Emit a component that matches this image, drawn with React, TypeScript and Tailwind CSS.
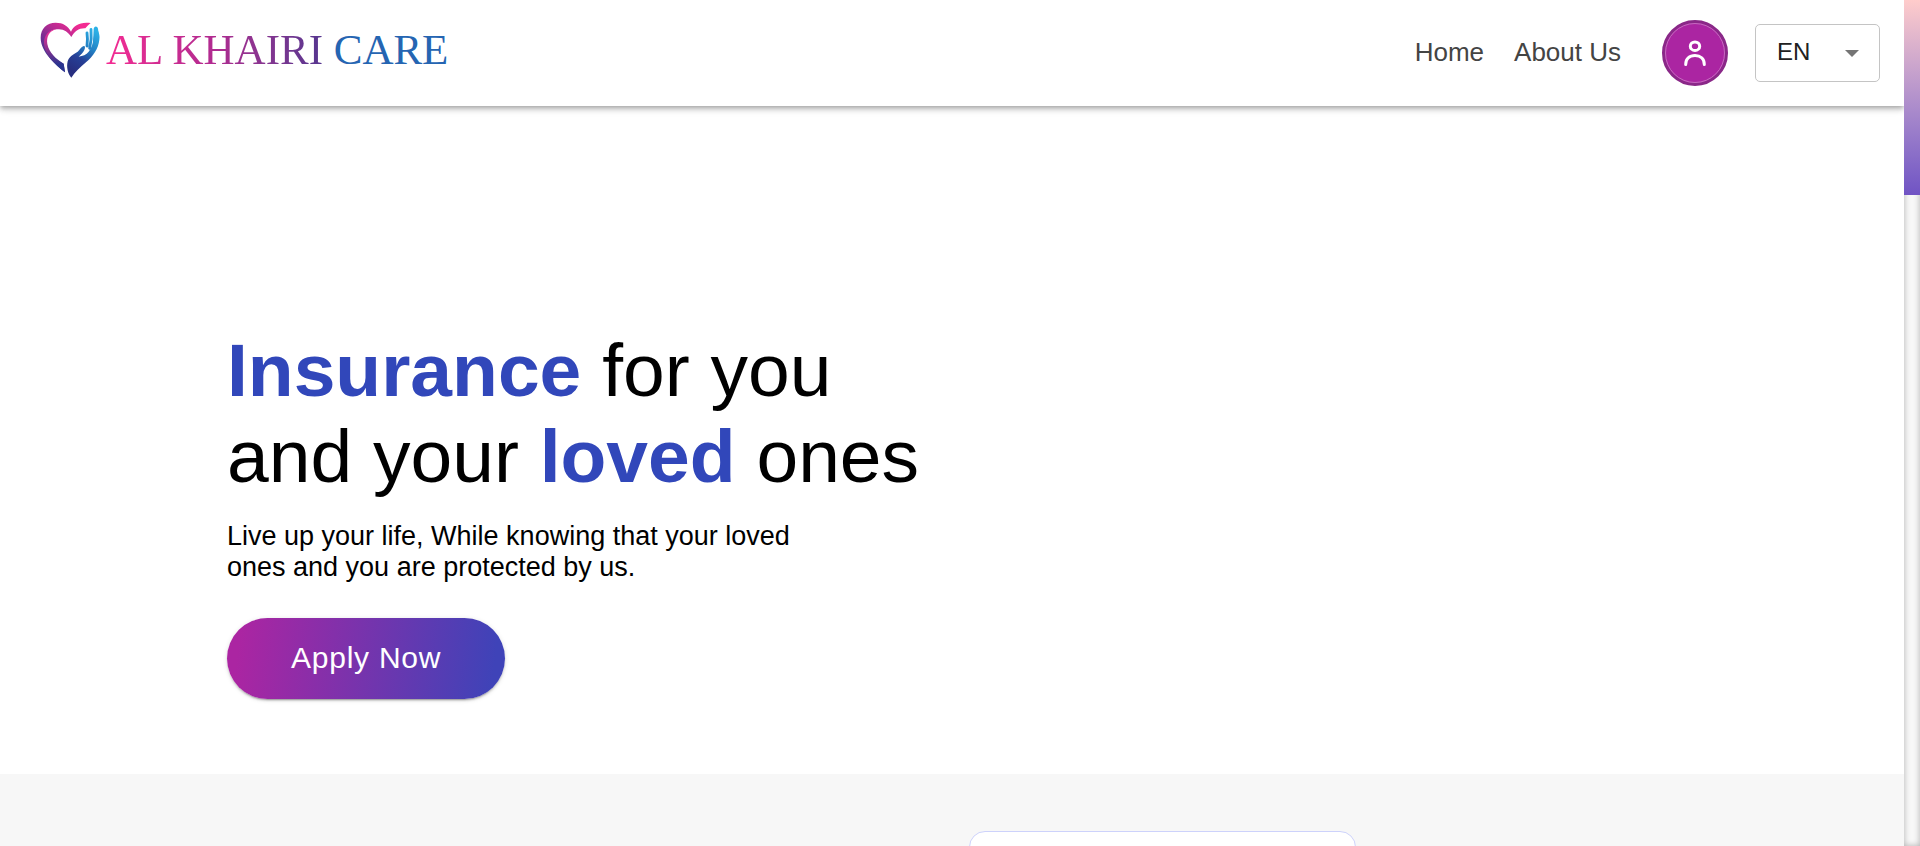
import React from "react";

function HeartLogo() {
  return (
    <svg viewBox="30 35 180 168" className="h-14 w-15 shrink-0" aria-hidden="true">
      <defs>
        <linearGradient id="heart" gradientUnits="userSpaceOnUse" x1="150" y1="45" x2="60" y2="170">
          <stop offset="0" stopColor="#f42b92" />
          <stop offset="0.35" stopColor="#b42b92" />
          <stop offset="0.65" stopColor="#6a2f92" />
          <stop offset="1" stopColor="#29348f" />
        </linearGradient>
        <linearGradient id="fold" gradientUnits="userSpaceOnUse" x1="60" y1="60" x2="70" y2="165">
          <stop offset="0" stopColor="#f0309a" />
          <stop offset="0.4" stopColor="#a3308f" />
          <stop offset="1" stopColor="#29348f" />
        </linearGradient>
        <linearGradient id="hand" gradientUnits="userSpaceOnUse" x1="195" y1="60" x2="120" y2="175">
          <stop offset="0" stopColor="#2bb0e6" />
          <stop offset="0.4" stopColor="#2380c3" />
          <stop offset="0.7" stopColor="#263f96" />
          <stop offset="1" stopColor="#272f80" />
        </linearGradient>
      </defs>
      <path
        fill="url(#heart)"
        d="M105 186C78 164 32 126 32 82C32 54 51 37 77 37C99 37 115 47 123 64C131 45 150 34 182 38C176 43 171 48 166 54C147 53 134 62 124 80C113 63 99 54 80 57C56 60 44 79 45 103C49 129 75 147 101 160Z"
      />
      <path
        fill="url(#fold)"
        d="M80 57C56 62 49 81 52 101C57 127 78 146 101 160L105 186C75 163 42 132 42 99C42 74 57 58 80 57Z"
      />
      <path
        fill="url(#hand)"
        d="M124 202C113 190 109 170 113 153C117 139 130 132 143 124C149 119 153 110 161 107C166 106 166 113 163 119C159 128 152 133 146 139C158 137 169 133 176 124C184 114 188 103 190 90L194 62C195 54 203 54 204 61C207 68 210 76 208 88C205 115 190 137 168 156C150 171 135 185 124 202Z"
      />
      <path
        fill="url(#hand)"
        d="M188 104C190 88 190 74 191 56C192 46 202 46 204 55C207 72 206 96 196 112Z"
      />
      <path
        fill="none"
        stroke="url(#hand)"
        strokeWidth="8.5"
        strokeLinecap="round"
        d="M171 68C173 81 173 93 171 107M183 57C185 76 184 94 179 114"
      />
    </svg>
  );
}

function Header() {
  return (
    <header className="relative flex h-[106px] shrink-0 items-center justify-between bg-white pr-6 pl-10 shadow-[0_2px_4px_-1px_rgba(0,0,0,0.2),0_4px_5px_0_rgba(0,0,0,0.14),0_1px_10px_0_rgba(0,0,0,0.12)]">
      <a
        href="#home"
        aria-label="Al Khairi Care"
        className="flex items-center gap-[6px] pb-[6px] font-['Liberation_Serif',serif] text-[43px] leading-[56px] whitespace-pre"
      >
        <HeartLogo />
        <span>
          <span className="bg-linear-to-r from-[#f42b92] via-[#b02a90] to-[#55358f] bg-clip-text text-transparent">
            AL KHAIRI
          </span>
          <span className="text-[#2565b2]"> CARE</span>
        </span>
      </a>
      <div className="flex items-center">
        <nav className="flex gap-[30px] pb-[2px] text-[26px] leading-[30px] text-[#444]">
          <a href="#home">Home</a>
          <a href="#about">About Us</a>
        </nav>
        <button
          type="button"
          aria-label="Account"
          className="ml-[41px] flex size-[66px] items-center justify-center rounded-full border-3 border-[#8a2888] bg-[#ab25a2]"
        >
          <span className="flex size-full items-center justify-center rounded-full border border-[#c56abf]">
            <svg viewBox="0 0 24 28" className="h-7 w-6" fill="none" stroke="#fff" strokeWidth="3" strokeLinecap="round">
              <ellipse cx="12" cy="7.2" rx="4.7" ry="4.3" />
              <path d="M2.7 25.5C2.7 20 6.5 16.5 12 16.5S21.3 20 21.3 25.5" />
            </svg>
          </span>
        </button>
        <div className="relative ml-[27px]">
          <select
            aria-label="Language"
            className="h-[58px] w-[125px] appearance-none rounded-[5px] border border-[#c4c4c4] bg-white pb-[2px] pl-[21px] text-2xl text-[#212121]"
          >
            <option>EN</option>
          </select>
          <svg viewBox="0 0 14 7" className="pointer-events-none absolute top-[26px] right-[21px] h-[7px] w-[14px]" aria-hidden="true">
            <path d="M0 0h14L7 7z" fill="#757575" />
          </svg>
        </div>
      </div>
    </header>
  );
}

function Hero() {
  return (
    <section className="bg-white pt-[221px] pr-6 pb-[75px] pl-[227px]">
      <h1 className="text-[75px] leading-[86px] text-black">
        <b className="text-[#3147ba]">Insurance</b> for you
        <br />
        and your <b className="text-[#3147ba]">loved</b> ones
      </h1>
      <p className="mt-[22px] max-w-[600px] text-[27px] leading-[31px] text-black">
        Live up your life, While knowing that your loved ones and you are protected by us.
      </p>
      <button
        type="button"
        className="mt-[35px] h-[81px] rounded-full bg-[linear-gradient(97deg,#ab25a2_5%,#3f43b8_95%)] px-16 pb-[2px] text-[30px] tracking-wide text-white shadow-[0_3px_1px_-2px_rgba(0,0,0,0.2),0_2px_2px_0_rgba(0,0,0,0.14),0_1px_5px_0_rgba(0,0,0,0.12)]"
      >
        Apply Now
      </button>
    </section>
  );
}

export default function App() {
  return (
    <div className="flex h-screen overflow-hidden bg-white font-['Liberation_Sans',Arial,sans-serif]">
      <div className="flex min-w-0 flex-1 flex-col overflow-hidden">
        <Header />
        <main className="flex flex-1 flex-col">
          <Hero />
          <section className="grid flex-1 grid-cols-2 bg-[#f7f7f7] pt-[57px]">
            <div className="col-start-2 pl-[17px]">
              <div className="h-80 w-[387px] rounded-2xl border border-[#cdd2fb] bg-white" />
            </div>
          </section>
        </main>
      </div>
      <div className="w-4 shrink-0 bg-[#f8f8f8] shadow-[inset_0_0_6px_rgba(0,0,0,0.3)]">
        <div className="h-[195px] bg-linear-to-b from-[#ffcccb] to-[#7053c4]" />
      </div>
    </div>
  );
}
